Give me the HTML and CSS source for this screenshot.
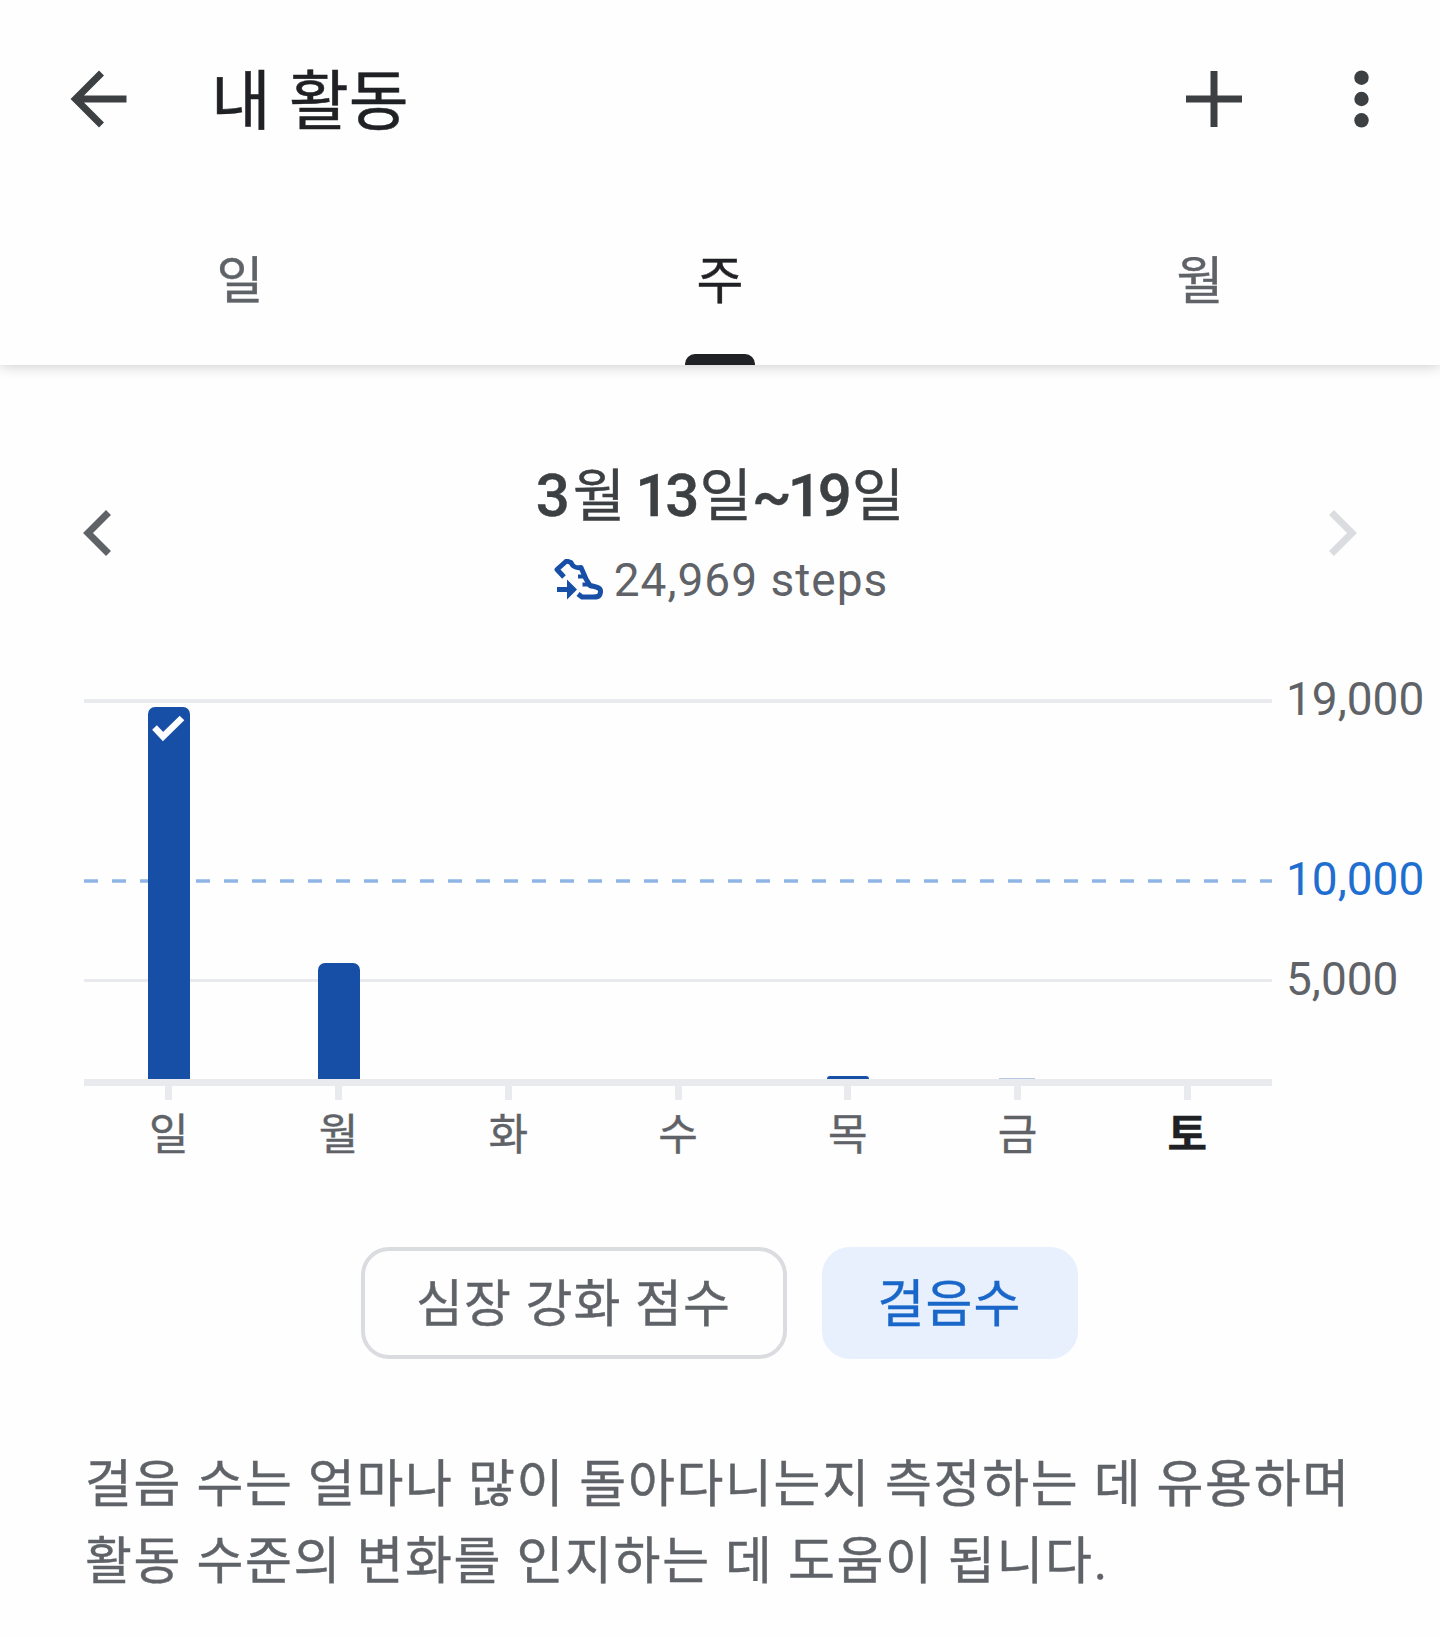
FILE: index.html
```
<!DOCTYPE html>
<html lang="ko">
<head>
  <meta charset="UTF-8" />
  <meta name="viewport" content="width=device-width, initial-scale=1" />
  <title>내 활동</title>
  <link rel="stylesheet" href="styles.css">
</head>
<body>

  <header class="app-bar">
    <svg class="icon back" viewBox="0 0 84 84" width="84" height="84"><path d="M70.500 42H20M45.500 16L19.500 42l26 26" /></svg>
    <h1>내 활동</h1>
    <svg class="icon add" viewBox="0 0 84 84" width="84" height="84"><path d="M42 14v56M14 42h56" /></svg>
    <svg class="icon more" viewBox="0 0 84 84" width="84" height="84">
      <circle cx="42.500" cy="20.700" r="7.200" /><circle cx="42.500" cy="42" r="7.200" /><circle cx="42.500" cy="63.300" r="7.200" />
    </svg>
  </header>

  <nav class="tabs">
    <a class="tab">일</a>
    <a class="tab active">주</a>
    <a class="tab">월</a>
  </nav>

  <main>
    <section class="period">
      <svg class="arrow" viewBox="0 0 28 46" width="28" height="46"><path d="M25.500 2.500L5 23l20.500 20.500" /></svg>
      <div class="period-info">
        <h2><b>3</b>월 <b>13</b>일<b>~19</b>일</h2>
        <p class="steps">
          <svg class="shoe" viewBox="0 0 50 42" width="50" height="42">
            <path class="outline" d="M10 18L3 10.500L12.500 2L17 3.500C19 9 23 9 27 8.500L32 20L36 26.500C41 28 47 28 46.500 33C46 38 43 38 39 38H28L24 35" />
            <path class="outline lace" d="M24 17.500h8M28.500 25.500h8" />
            <path class="arrow-in" d="M3 28h10v-7.500L23 30.500l-10 10V33H3z" />
          </svg>
          <span>24,969 steps</span>
        </p>
      </div>
      <svg class="arrow disabled" viewBox="0 0 28 46" width="28" height="46"><path d="M2.500 2.500L23 23L2.500 43.500" /></svg>
    </section>

    <section class="chart">
      <div class="plot">
        <div class="grid-line top"><span>19,000</span></div>
        <div class="grid-line goal">
          <svg width="1188" height="4"><path d="M0 2H1188" /></svg>
          <span>10,000</span>
        </div>
        <div class="grid-line low"><span>5,000</span></div>
        <div class="bars">
          <div class="bar" style="height: 372px">
            <svg viewBox="0 0 42 42" width="42" height="42"><path d="M6.500 20.500l8.500 9L34 11" /></svg>
          </div>
          <div class="bar" style="height: 116px"></div>
          <div class="bar" style="height: 0"></div>
          <div class="bar" style="height: 0"></div>
          <div class="bar" style="height: 3px"></div>
          <div class="bar tiny" style="height: 1px"></div>
          <div class="bar" style="height: 0"></div>
        </div>
      </div>
      <div class="days">
        <span>일</span>
        <span>월</span>
        <span>화</span>
        <span>수</span>
        <span>목</span>
        <span>금</span>
        <span class="today">토</span>
      </div>
    </section>

    <div class="chips">
      <button class="chip">심장 강화 점수</button>
      <button class="chip selected">걸음수</button>
    </div>

    <p class="description">걸음 수는 얼마나 많이 돌아다니는지 측정하는 데 유용하며<br>활동 수준의 변화를 인지하는 데 도움이 됩니다.</p>
  </main>

</body>
</html>
```

FILE: styles.css
```
* {
  box-sizing: border-box;
}
body {
  margin: 0;
  height: 1638px;
  overflow: hidden;
  font-family: Roboto, "Noto Sans CJK KR", sans-serif;
  color: #5f6368;
  background: #fefefe;
}
h1, h2, p {
  margin: 0;
  font-weight: normal;
}
svg {
  display: block;
  flex: none;
  fill: none;
}

/* App bar */
.app-bar {
  display: flex;
  align-items: center;
  height: 200px;
  padding: 0 37px 2px 56px;
}
.icon {
  stroke: #3c4043;
  stroke-width: 7;
}
.more {
  margin-left: 63px;
  fill: #3c4043;
  stroke: none;
}
h1 {
  flex: 1;
  margin-left: 71px;
  padding-bottom: 7px;
  font-family: "Noto Sans CJK KR", sans-serif;
  font-size: 65px;
  line-height: 80px;
  color: #202124;
  -webkit-text-stroke: 0.5px;
}

/* Tabs */
.tabs {
  display: flex;
  height: 165px;
  box-shadow: 0 2px 12px rgba(0, 0, 0, 0.18);
  clip-path: inset(0 0 -20px 0);
}
.tab {
  flex: 1;
  display: flex;
  flex-direction: column;
  align-items: center;
  justify-content: space-between;
  padding-top: 47px;
  font-size: 51px;
  line-height: 70px;
}
.tab, .days, .chip, .description {
  -webkit-text-stroke: 0.4px;
}
.tab.active {
  color: #202124;
}
.tab.active::after {
  content: "";
  width: 70px;
  height: 11px;
  border-radius: 10px 10px 0 0;
  background: #202124;
}

/* Date range */
.period {
  display: flex;
  align-items: center;
  justify-content: space-between;
  height: 335px;
  padding: 0 83px;
}
.arrow {
  stroke: #5f6368;
  stroke-width: 7;
}
.arrow.disabled {
  stroke: #dadce0;
}
.period-info {
  display: flex;
  flex-direction: column;
  align-items: center;
  padding-top: 6px;
}
h2 {
  font-family: "Noto Sans CJK KR", sans-serif;
  font-size: 57px;
  line-height: 80px;
  word-spacing: -6px;
  color: #3c4043;
  -webkit-text-stroke: 0.4px;
}
h2 b {
  margin-right: 4px;
  font-family: Roboto, sans-serif;
  font-size: 60px;
  font-weight: 500;
  letter-spacing: -4px;
}
h2 b:first-child {
  margin-right: 7px;
}
.steps {
  display: flex;
  align-items: center;
  gap: 10px;
  margin-top: 4px;
  padding-left: 2px;
  font-size: 46px;
  line-height: 80px;
  letter-spacing: 1px;
}
.outline {
  stroke: #174ea6;
  stroke-width: 5;
  stroke-linejoin: round;
}
.lace {
  stroke-width: 4;
}
.arrow-in {
  fill: #174ea6;
}

/* Chart */
.chart {
  width: 1188px;
  margin-left: 84px;
}
.plot {
  position: relative;
  height: 386px;
  border-bottom: 7px solid #e8eaed;
}
.grid-line {
  position: absolute;
  left: 0;
  right: 0;
  height: 4px;
  background: #e8eaed;
}
.grid-line span {
  position: absolute;
  left: 100%;
  top: -28px;
  margin-left: 14px;
  font-size: 46px;
  line-height: 56px;
}
.grid-line.top {
  top: -1px;
}
.grid-line.goal {
  top: 179px;
  background: none;
  color: #1f6ed0;
}
.goal path {
  stroke: #8fb5e6;
  stroke-width: 3.500;
  stroke-dasharray: 14 14;
}
.grid-line.low {
  top: 279px;
  height: 3px;
}
.bars {
  position: relative;
  display: flex;
  align-items: flex-end;
  justify-content: space-around;
  height: 379px;
}
.bar {
  width: 42px;
  border-radius: 7px 7px 0 0;
  background: #174ea6;
}
.bar path {
  stroke: #fff;
  stroke-width: 6.500;
}
.bar.tiny {
  width: 36px;
  margin: 0 3px;
  border-radius: 0;
  opacity: 0.3;
}
.days {
  display: flex;
  font-size: 43px;
  line-height: 60px;
}
.days span {
  flex: 1;
  text-align: center;
}
.days span::before {
  content: "";
  display: block;
  width: 7px;
  height: 14px;
  margin: 0 auto 5px;
  background: #e8eaed;
}
.days .today {
  font-weight: bold;
  color: #202124;
}

/* Metric chips */
.chips {
  display: flex;
  justify-content: center;
  gap: 35px;
  margin-top: 82px;
  padding-right: 2px;
}
.chip {
  width: 426px;
  height: 112px;
  padding: 3px 0 0;
  border: 4px solid #dadce0;
  border-radius: 28px;
  font: inherit;
  font-size: 51px;
  line-height: 70px;
  letter-spacing: 1px;
  color: #5f6368;
  background: none;
}
.chip.selected {
  width: 256px;
  border-color: #e8f0fe;
  color: #1967c8;
  background: #e8f0fe;
}

.description {
  margin: 87px 0 0 85px;
  font-size: 51px;
  line-height: 77px;
  letter-spacing: 1.650px;
  white-space: nowrap;
}
```
